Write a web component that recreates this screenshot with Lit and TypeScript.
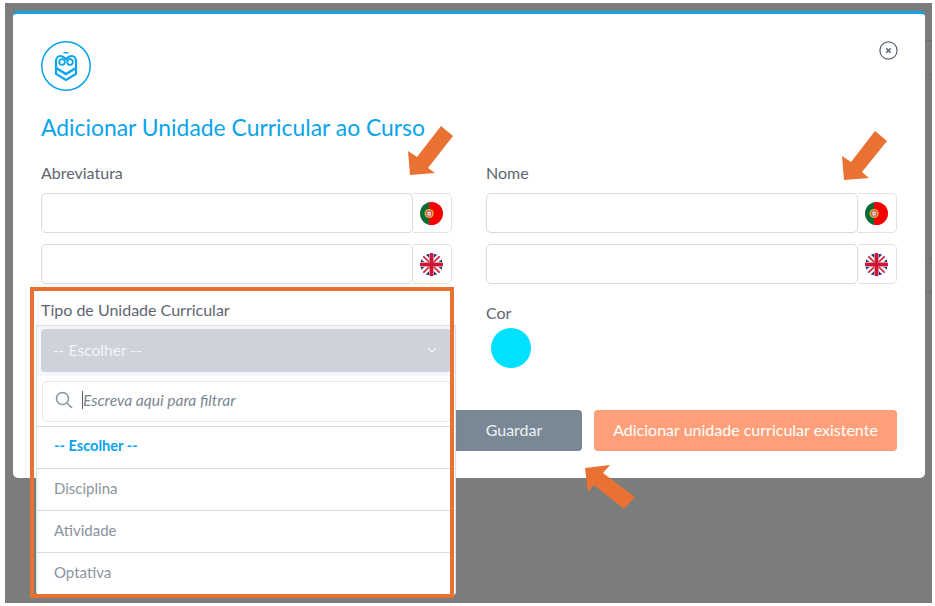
import { LitElement, html, css, svg } from "lit";
import { customElement } from "lit/decorators.js";

const ptFlag = svg`<svg class="flag" viewBox="0 0 24 24" width="23" height="23">
  <defs><clipPath id="pc"><circle cx="12" cy="12" r="12"/></clipPath></defs>
  <g clip-path="url(#pc)"><rect width="10" height="24" fill="#0a6b35"/><rect x="9.500" width="14.500" height="24" fill="#f40000"/></g>
  <circle cx="9.500" cy="12" r="4.800" fill="#d9b23a"/><circle cx="9.500" cy="12" r="3.300" fill="#d9534f"/><rect x="7.800" y="10.200" width="3.400" height="3.800" rx=".8" fill="#f0f0f0"/><rect x="8.700" y="11.200" width="1.600" height="1.800" fill="#8c9cc4"/>
</svg>`;

const ukFlag = svg`<svg class="flag" viewBox="0 0 24 24" width="23" height="23">
  <defs><clipPath id="uc"><circle cx="12" cy="12" r="12"/></clipPath></defs>
  <g clip-path="url(#uc)"><rect width="24" height="24" fill="#f6f6f6"/>
  <g fill="#1f2f78"><path d="M1 6.500 L4.500 9.500 H1Z M9.500 1 V5 L6 1.500Z M14.500 1 V5 L18 1.500Z M23 6.500 L19.500 9.500 H23Z M1 17.500 L4.500 14.500 H1Z M9.500 23 V19 L6 22.500Z M14.500 23 V19 L18 22.500Z M23 17.500 L19.500 14.500 H23Z"/></g>
  <path d="M3 3 L9.500 9.500 M21 3 L14.500 9.500 M3 21 L9.500 14.500 M21 21 L14.500 14.500" stroke="#d01436" stroke-width="1.500"/>
  <rect x="10" width="4" height="24" fill="#d01436"/><rect y="10" width="24" height="4" fill="#d01436"/></g>
</svg>`;

const arrows = [
  { l: 400, t: 120, pts: "10,55 8,31 17,37 41,6 53,16 28,48 35,53" },
  { l: 834, t: 125, pts: "10,55 8,31 17,37 41,6 53,16 28,47 35,53" },
  { l: 580, t: 460, pts: "5,8 30,5 23,13 55,37 44,49 14,25 8,32" },
];

@customElement("app-root")
export class AppRoot extends LitElement {
  static styles = css`
    :host { display: block; width: 935px; height: 606px; box-sizing: border-box; padding: 3px 3px 3px 5px; background: #fff; font-family: "Lato", "Liberation Sans", sans-serif; color: #5d6570; position: relative; overflow: hidden; }
    .backdrop {
      height: 100%; box-sizing: border-box; padding: 8px 0 0 8px; position: relative; background-color: #7b7d7c;
      background-image: linear-gradient(to bottom,
        transparent 37px, #6f716f 37px, #6f716f 38px, transparent 38px,
        transparent 71px, #6f716f 71px, #6f716f 72px, transparent 72px,
        transparent 255px, #6f716f 255px, #6f716f 256px, transparent 256px,
        transparent 289px, #6f716f 289px, #6f716f 290px, transparent 290px);
      background-size: 7px 100%; background-position: right top; background-repeat: no-repeat;
    }
    .modal { width: 912px; height: 467px; box-sizing: border-box; background: #fff; border-top: 3px solid #0ea5e9; border-radius: 5px; padding: 27px 28px 0; position: relative; }
    .logo { display: block; width: 50px; height: 50px; }
    .close { position: absolute; top: 27px; right: 27px; width: 19px; height: 19px; }
    h1 { margin: 21px 0 0; font-size: 22.9px; line-height: 30px; font-weight: 400; color: #0aa4ec; }
    .grid { display: grid; grid-template-columns: 411px 411px; column-gap: 34px; margin-top: 21px; }
    label { display: block; font-size: 16px; line-height: 20px; color: #5d6570; }
    .group { display: flex; height: 40px; margin-top: 10px; }
    .group + .group { margin-top: 11px; }
    .input { flex: 1; border: 1px solid #d6dbe1; border-radius: 5px; }
    .addon { width: 39px; box-sizing: border-box; border: 1px solid #dfe3e8; border-left: 0; border-radius: 0 5px 5px 0; display: flex; align-items: center; justify-content: center; padding-right: 1px; }
    .tipo { margin-top: 16px; position: relative; height: 110px; }
    .cor { margin-top: 19px; }
    .swatch { width: 40px; height: 40px; border-radius: 50%; background: #00e1ff; margin: 5px 0 0 5px; }
    .dd { position: absolute; top: 25px; left: -5px; width: 420px; box-sizing: border-box; background: #fff; border: 1px solid #dde2e8; border-radius: 0 0 4px 4px; box-shadow: 0 0 1px rgba(0,0,0,.2); z-index: 2; }
    .dd-head { background: #f4f6f9; padding: 3px 4px 4px; }
    .select { height: 43px; box-sizing: border-box; background: #cdd2db; border-radius: 4px; display: flex; align-items: center; justify-content: space-between; padding: 0 14px 2px 12px; color: #f3f5f8; font-size: 15.6px; }
    .search-wrap { padding: 5px 4px 4px 5px; border-bottom: 1px solid #d6dbe1; }
    .search { height: 41px; box-sizing: border-box; border: 1px solid #e3e7ec; border-radius: 5px; display: flex; align-items: center; padding: 0 0 3px 12px; gap: 9px; font-style: italic; font-size: 15.6px; color: #7d8793; }
    .text { border-left: 1px solid #5d6570; line-height: 18px; }
    .opt { height: 42px; box-sizing: border-box; display: flex; align-items: center; padding: 0 0 4px 17px; font-size: 15px; color: #8a939e; border-bottom: 1px solid #d6dbe1; }
    .opt:last-child { border-bottom: 0; }
    .opt.active { color: #0aa4ec; font-weight: 700; font-size: 14.6px; }
    .actions { display: flex; justify-content: flex-end; gap: 12px; }
    .btn { height: 41px; box-sizing: border-box; padding-bottom: 3px; border-radius: 4px; display: flex; align-items: center; justify-content: center; color: #fff; font-size: 16px; }
    .save { width: 136px; background: #7a8896; color: #eef1f4; }
    .add { width: 303px; background: #ff9f7a; }
    .frame { position: absolute; left: 30px; top: 287px; width: 424px; height: 311px; box-sizing: border-box; border: 4px solid #e97132; z-index: 3; pointer-events: none; }
    .arrow { position: absolute; width: 60px; height: 55px; z-index: 4; }
  `;

  private group() {
    return html`
      <div class="group"><div class="input"></div><div class="addon">${ptFlag}</div></div>
      <div class="group"><div class="input"></div><div class="addon">${ukFlag}</div></div>`;
  }

  render() {
    return html`
      <div class="backdrop">
        <div class="modal">
          <svg class="logo" viewBox="0 0 50 50" fill="none" stroke="#0aa4ec">
            <circle cx="25" cy="25" r="24.200" stroke-width="1.500"/>
            <path d="M22.500 11.800h5" stroke-width="1.400"/>
            <path d="M25 18C23 16 21 15 19.500 15C16.500 15 15 17.500 15 20V33L25 39L35 33V20C35 17.500 33.500 15 30.500 15C29 15 27 16 25 18Z" stroke-width="2.200"/>
            <circle cx="21" cy="21" r="2.800" stroke-width="1.800"/>
            <circle cx="29" cy="21" r="2.800" stroke-width="1.800"/>
            <path d="M15 27L25 33L35 27" stroke-width="2.600"/>
          </svg>
          <svg class="close" viewBox="0 0 19 19" fill="none" stroke="#56606c">
            <circle cx="9.500" cy="9.500" r="8.600" stroke-width="1.200"/>
            <path d="M7.300 7.300l4.400 4.400M11.700 7.300l-4.400 4.400" stroke-width="1.500"/>
          </svg>
          <h1>Adicionar Unidade Curricular ao Curso</h1>
          <div class="grid">
            <div><label>Abreviatura</label>${this.group()}</div>
            <div><label>Nome</label>${this.group()}</div>
            <div class="tipo">
              <label>Tipo de Unidade Curricular</label>
              <div class="dd">
                <div class="dd-head">
                  <div class="select"><span>-- Escolher --</span>
                    <svg width="10" height="6" viewBox="0 0 10 6" fill="none" stroke="#f3f5f8" stroke-width="1.200"><path d="M1 1l4 4 4-4"/></svg>
                  </div>
                </div>
                <div class="search-wrap">
                  <div class="search">
                    <svg width="18" height="18" viewBox="0 0 18 18" fill="none" stroke="#8b97a5" stroke-width="1.600"><circle cx="7.500" cy="7.500" r="6"/><path d="M12 12l5 5"/></svg>
                    <span class="text">Escreva aqui para filtrar</span>
                  </div>
                </div>
                <div class="opt active">-- Escolher --</div>
                <div class="opt">Disciplina</div>
                <div class="opt">Atividade</div>
                <div class="opt">Optativa</div>
              </div>
            </div>
            <div class="cor"><label>Cor</label><div class="swatch"></div></div>
          </div>
          <div class="actions">
            <div class="btn save">Guardar</div>
            <div class="btn add">Adicionar unidade curricular existente</div>
          </div>
        </div>
      </div>
      <div class="frame"></div>
      ${arrows.map(
        (a) => html`<svg class="arrow" style="left:${a.l}px;top:${a.t}px" viewBox="0 0 60 55"><polygon points=${a.pts} fill="#e97132"/></svg>`
      )}
    `;
  }
}
